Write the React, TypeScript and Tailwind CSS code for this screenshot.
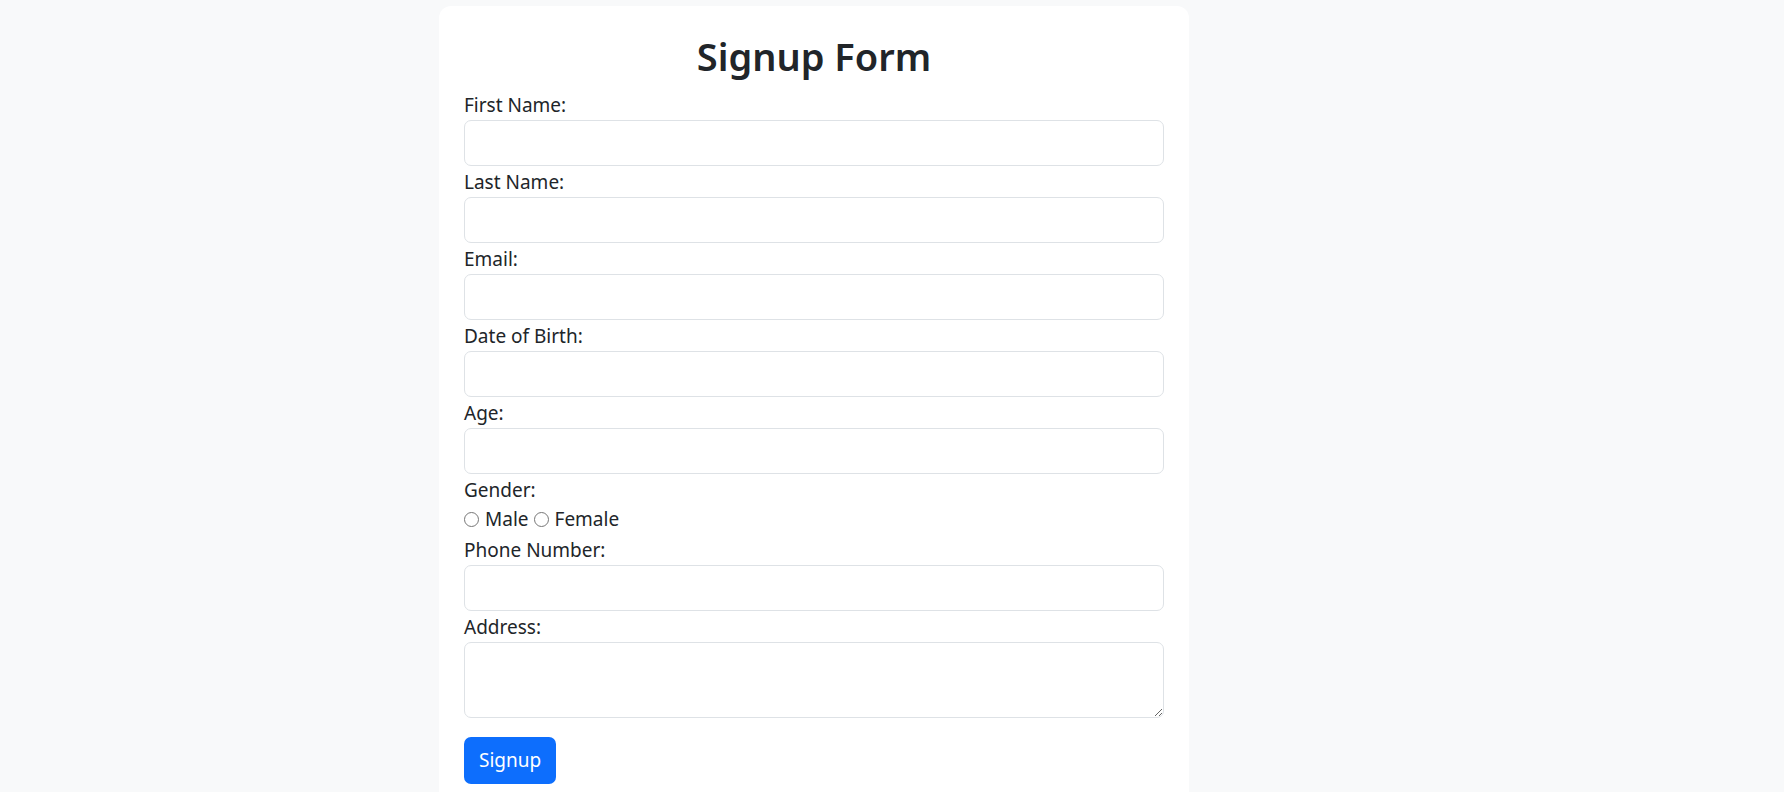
export default function App() {
  const fields = [
    { id: "firstName", label: "First Name:", type: "text" },
    { id: "lastName", label: "Last Name:", type: "text" },
    { id: "email", label: "Email:", type: "email" },
    { id: "dob", label: "Date of Birth:", type: "text" },
    { id: "age", label: "Age:", type: "text" },
  ]

  const inputClass =
    "block w-full h-[46px] rounded-[7px] border border-[#dee2e6] bg-white px-[14px] text-[19px] outline-none"

  return (
    <div
      className="min-h-[1400px] bg-[#f8f9fa] pt-[6px] text-[#212529]"
      style={{ fontFamily: '"Noto Sans", "Open Sans", sans-serif' }}
    >
      <div className="ml-[439px] w-[750px] rounded-[12px] bg-white px-[25px] pt-[27px] pb-[40px]">
        <h2 className="mb-[12px] text-center text-[38px] font-semibold leading-[46px]">Signup Form</h2>

        {fields.map((field) => (
          <div key={field.id} className="mb-[2px]">
            <label htmlFor={field.id} className="block text-[19px] leading-[29px]">
              {field.label}
            </label>
            <input id={field.id} type={field.type} className={inputClass} />
          </div>
        ))}

        <div className="mb-[2px]">
          <label className="block text-[19px] leading-[29px]">Gender:</label>
          <div className="flex items-center text-[19px] leading-[29px]">
            <input type="radio" name="gender" id="male" className="m-0 mr-[6px] h-[15px] w-[15px]" />
            <label htmlFor="male" className="mr-[5px]">Male</label>
            <input type="radio" name="gender" id="female" className="m-0 mr-[6px] h-[15px] w-[15px]" />
            <label htmlFor="female">Female</label>
          </div>
        </div>

        <div className="mb-[2px]">
          <label htmlFor="phone" className="block text-[19px] leading-[29px]">
            Phone Number:
          </label>
          <input id="phone" type="tel" className={inputClass} />
        </div>

        <div className="mb-[19px]">
          <label htmlFor="address" className="block text-[19px] leading-[29px]">
            Address:
          </label>
          <textarea
            id="address"
            rows={2}
            className="block h-[76px] w-full rounded-[7px] border border-[#dee2e6] bg-white px-[14px] py-[7px] text-[19px] outline-none"
          />
        </div>

        <button
          type="submit"
          className="h-[47px] rounded-[7px] bg-[#0d6efd] px-[15px] text-[19px] text-white"
        >
          Signup
        </button>
      </div>
    </div>
  )
}
